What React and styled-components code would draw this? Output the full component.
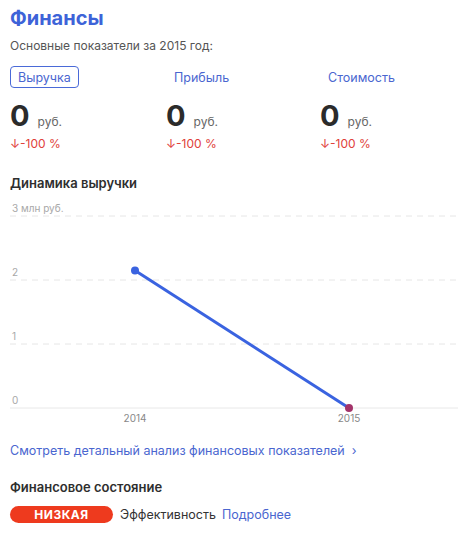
import React from "react";
import styled, { createGlobalStyle } from "styled-components";

const GlobalStyle = createGlobalStyle`
  body {
    margin: 0;
    background: #fff;
    font-family: Inter, "Noto Sans", Arial, sans-serif;
    color: #333;
  }
`;

const Container = styled.div`
  width: 465px;
  padding: 6px 10px 0 10px;
  box-sizing: border-box;
`;

const Title = styled.h2`
  margin: 0;
  font-size: 20px;
  line-height: 24px;
  font-weight: 700;
  color: #3d63d8;
`;

const Subtitle = styled.div`
  margin-top: 8px;
  font-size: 12px;
  line-height: 16px;
  color: #555;
`;

const Tabs = styled.div`
  display: grid;
  grid-template-columns: 156px 154px 1fr;
  margin-top: 12px;
`;

const Tab = styled.div`
  display: flex;
  flex-direction: column;
  align-items: flex-start;
`;

const TabLabel = styled.div`
  height: 22px;
  box-sizing: border-box;
  padding: 0 7px;
  display: flex;
  align-items: center;
  border: 1px solid ${(p) => (p.$active ? "#4a6ad8" : "transparent")};
  border-radius: 4px;
  font-size: 12.5px;
  color: #4a66d0;
`;

const Value = styled.div`
  display: flex;
  align-items: baseline;
  margin-top: 11px;
`;

const Big = styled.span`
  font-size: 29px;
  line-height: 34px;
  font-weight: 700;
  color: #2b2b2b;
`;

const Unit = styled.span`
  margin-left: 8px;
  font-size: 12px;
  color: #666;
`;

const Change = styled.div`
  margin-top: 3px;
  font-size: 12px;
  color: #e0403a;
`;

const SectionTitle = styled.div`
  margin-top: ${(p) => p.$top}px;
  font-size: 13px;
  line-height: 16px;
  font-weight: 600;
  color: #2e2e2e;
`;

const Chart = styled.svg`
  display: block;
  margin-top: 9px;
`;

const Link = styled.div`
  margin-top: 17px;
  font-size: 12.5px;
  line-height: 16px;
  color: #4a66d0;
`;

const StateRow = styled.div`
  display: flex;
  align-items: center;
  margin-top: 11px;
  font-size: 12.5px;
`;

const Badge = styled.span`
  width: 103px;
  height: 17px;
  border-radius: 9px;
  background: #ee3a1e;
  color: #fff;
  font-weight: 700;
  font-size: 12px;
  letter-spacing: 0.5px;
  display: flex;
  align-items: center;
  justify-content: center;
  margin-right: 7px;
`;

const Muted = styled.span`
  color: #333;
  margin-right: 6px;
`;

const More = styled.span`
  color: #4a66d0;
`;

const tabs = [
  { label: "Выручка", active: true },
  { label: "Прибыль" },
  { label: "Стоимость" },
];

const RevenueChart = () => {
  const y = (v) => 208 - v * 64;
  const gray = "#a8a8a8";
  return (
    <Chart width="449" height="226" viewBox="0 0 449 226">
      <text x="2" y="12" fontSize="10" fill={gray} fontFamily="Inter, sans-serif">3 млн руб.</text>
      {[3, 2, 1].map((v) => (
        <line key={v} x1="0" x2="448" y1={y(v)} y2={y(v)} stroke="#e6e6e6" strokeDasharray="6 5" />
      ))}
      <line x1="0" x2="448" y1={y(0)} y2={y(0)} stroke="#e8e8e8" />
      <text x="2" y={y(2) - 4} fontSize="10" fill={gray} fontFamily="Inter, sans-serif">2</text>
      <text x="2" y={y(1) - 4} fontSize="10" fill={gray} fontFamily="Inter, sans-serif">1</text>
      <text x="2" y={y(0) - 4} fontSize="10" fill={gray} fontFamily="Inter, sans-serif">0</text>
      <line x1="125" y1={y(2.15)} x2="339" y2={y(0)} stroke="#3a63e0" strokeWidth="3" />
      <circle cx="125" cy={y(2.15)} r="4" fill="#3a63e0" />
      <circle cx="339" cy={y(0)} r="4" fill="#a3336a" />
      <text x="125" y="222" fontSize="10" fill="#888" textAnchor="middle" fontFamily="Inter, sans-serif">2014</text>
      <text x="339" y="222" fontSize="10" fill="#888" textAnchor="middle" fontFamily="Inter, sans-serif">2015</text>
    </Chart>
  );
};

const App = () => {
  return (
    <Container>
      <GlobalStyle />
      <Title>Финансы</Title>
      <Subtitle>Основные показатели за 2015 год:</Subtitle>
      <Tabs>
        {tabs.map((t) => (
          <Tab key={t.label}>
            <TabLabel $active={t.active}>{t.label}</TabLabel>
            <Value>
              <Big>0</Big>
              <Unit>руб.</Unit>
            </Value>
            <Change>↓-100 %</Change>
          </Tab>
        ))}
      </Tabs>
      <SectionTitle $top={24}>Динамика выручки</SectionTitle>
      <RevenueChart />
      <Link>Смотреть детальный анализ финансовых показателей &nbsp;›</Link>
      <SectionTitle $top={20}>Финансовое состояние</SectionTitle>
      <StateRow>
        <Badge>НИЗКАЯ</Badge>
        <Muted>Эффективность</Muted>
        <More>Подробнее</More>
      </StateRow>
    </Container>
  );
};

export default App;
